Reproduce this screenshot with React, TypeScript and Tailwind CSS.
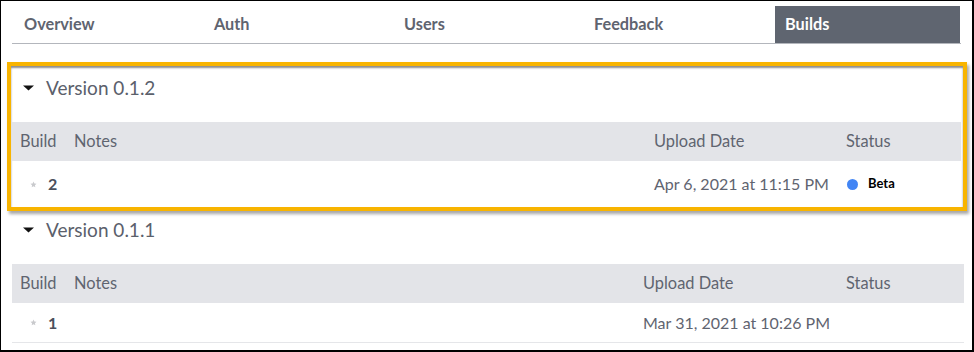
import React from 'react';

const tabs = ['Overview', 'Auth', 'Users', 'Feedback', 'Builds'];

type Build = {
  number: string;
  date: string;
  status?: string;
};

function Caret() {
  return (
    <svg width="11" height="6" viewBox="0 0 11 6" className="shrink-0">
      <path d="M0 0.5 L11 0.5 L5.5 5.5 Z" fill="#111" />
    </svg>
  );
}

function Star() {
  return (
    <svg width="7" height="7" viewBox="0 0 24 24" className="shrink-0">
      <path
        d="M12 2l3 6.6 7.2.8-5.4 4.9 1.5 7.1L12 17.8 5.7 21.4l1.5-7.1L1.8 9.4 9 8.6z"
        fill="#c9cacd"
      />
    </svg>
  );
}

function VersionHeader({ label, className }: { label: string; className: string }) {
  return (
    <div className={`flex items-start gap-[12px] ${className}`}>
      <div className="flex h-[24px] items-center">
        <Caret />
      </div>
      <span className="text-[19px] leading-[24px] text-[#5b606b]">{label}</span>
    </div>
  );
}

function BuildTable({ cols, builds, bordered }: { cols: string; builds: Build[]; bordered?: boolean }) {
  return (
    <div>
      <div className={`grid h-[39px] items-center bg-[#e3e4e8] text-[16.4px] text-[#5f6470] ${cols}`}>
        <div className="pl-2">Build</div>
        <div className="pl-2">Notes</div>
        <div className="pl-2">Upload Date</div>
        <div className="pl-2">Status</div>
      </div>
      {builds.map((b) => (
        <div
          key={b.number}
          className={`grid items-center text-[16px] text-[#5f6470] ${cols} ${
            bordered ? 'h-[40px] border-b border-[#e5e6e9]' : 'h-[46px]'
          }`}
        >
          <div className="flex items-center">
            <div className="w-[18px]" />
            <Star />
            <span className="ml-[11px] font-bold text-[#4b505c]">{b.number}</span>
          </div>
          <div />
          <div className="pl-2">{b.date}</div>
          <div className="flex items-center pl-2">
            {b.status && (
              <>
                <span className="ml-[1px] h-[11px] w-[11px] rounded-full bg-[#4285f4]" />
                <span className="ml-[10px] text-[13px] font-bold text-black">{b.status}</span>
              </>
            )}
          </div>
        </div>
      ))}
    </div>
  );
}

export default function App() {
  return (
    <div
      className="h-[352px] w-[974px] overflow-hidden border-t border-l border-r-2 border-b-2 border-black bg-white"
      style={{ fontFamily: 'Lato, "Open Sans", sans-serif' }}
    >
      <div className="px-[11px] pt-[5px]">
        {/* Tabs */}
        <div className="grid h-[38px] grid-cols-[190px_190px_190px_191px_1fr] border-b border-[#b3b6bc]">
          {tabs.map((t) => (
            <div
              key={t}
              className={`flex items-center text-[16.3px] font-bold ${
                t === 'Builds' ? 'mr-[1px] ml-[2px] bg-[#5f6570] pl-[10px] text-white' : 'pl-3 text-[#5f6470]'
              }`}
            >
              {t}
            </div>
          ))}
        </div>
      </div>

      {/* Highlighted version */}
      <div className="mt-[18px] ml-[6px] mr-[5px] border-4 border-[#f8b400] pr-[2px] pl-[1px] shadow-[inset_0_2px_2px_rgba(0,0,0,0.45),2px_3px_3px_rgba(0,0,0,0.35)]">
        <VersionHeader label="Version 0.1.2" className="h-[56px] pt-[10px] pl-[11px]" />
        <BuildTable
          cols="grid-cols-[54px_580px_192px_124px]"
          builds={[{ number: '2', date: 'Apr 6, 2021 at 11:15 PM', status: 'Beta' }]}
        />
      </div>

      <div className="pl-[11px] pr-[8px]">
        <VersionHeader label="Version 0.1.1" className="h-[53px] pt-[7px] pl-[11px]" />
        <BuildTable
          cols="grid-cols-[54px_569px_203px_126px]"
          builds={[{ number: '1', date: 'Mar 31, 2021 at 10:26 PM' }]}
          bordered
        />
      </div>
    </div>
  );
}
